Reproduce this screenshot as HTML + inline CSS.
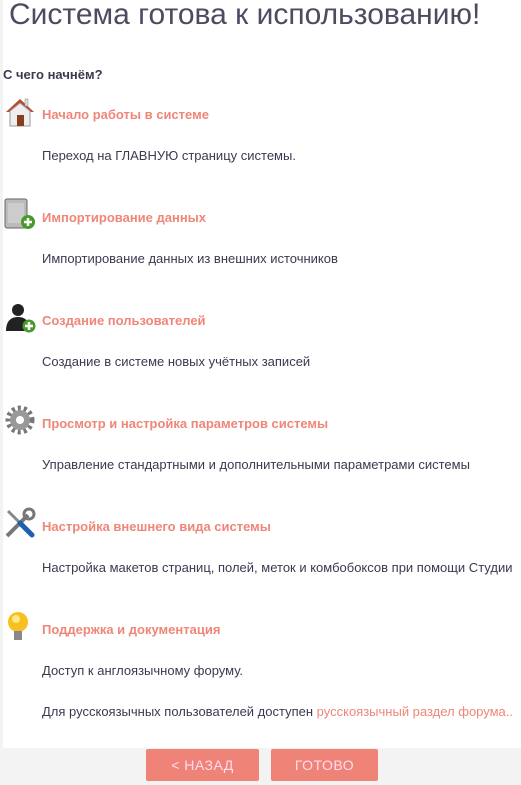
<!DOCTYPE html>
<html><head><meta charset="utf-8"><style>
body{margin:0;width:521px;height:785px;background:#f3f3f3;font-family:"Liberation Sans",Arial,sans-serif;position:relative;overflow:hidden}
.main{position:absolute;left:3px;top:0;width:518px;height:748px;background:#fff}
.t{position:absolute;white-space:nowrap}
h1{position:absolute;left:9px;top:-2px;margin:0;font-weight:normal;font-size:30px;color:#4f4a60}
.q{left:3px;top:67px;font-size:13px;font-weight:bold;color:#3a3a50}
.h{left:42px;font-size:13px;font-weight:bold;color:#ef8678}
.d{left:42px;font-size:13px;color:#3a3a50}
.ic{position:absolute;left:4px;width:32px;height:32px}
.btn{position:absolute;top:749px;height:32px;background:#ef8377;color:#fde;font-size:14px;text-align:center;line-height:32px;border-radius:2px;letter-spacing:.5px}
</style></head><body>
<div class="main"></div>
<h1>Система готова к использованию!</h1>
<div class="t q">С чего начнём?</div>

<svg class="ic" style="top:95px" viewBox="0 0 32 32"><polygon points="2,17 16,4 30,17 27,17 16,8 5,17" fill="#c0452a"/><rect x="21" y="4" width="3" height="7" fill="#ddd" stroke="#888" stroke-width=".5"/><polygon points="6,16 16,8 26,16 26,31 6,31" fill="#eee" stroke="#999"/><rect x="13" y="20" width="7" height="11" fill="#8a3d1a"/></svg>
<div class="t h" style="top:107px">Начало работы в системе</div>
<div class="t d" style="top:148px">Переход на ГЛАВНУЮ страницу системы.</div>

<svg class="ic" style="top:198px" viewBox="0 0 32 32"><rect x="1" y="1" width="22" height="29" rx="2" fill="#bbb" stroke="#666"/><rect x="4" y="5" width="16" height="20" fill="#ccc"/><circle cx="24" cy="24" r="7" fill="#4a9a2a"/><path d="M24 20v8M20 24h8" stroke="#fff" stroke-width="2.5"/></svg>
<div class="t h" style="top:210px">Импортирование данных</div>
<div class="t d" style="top:251px">Импортирование данных из внешних источников</div>

<svg class="ic" style="top:301px" viewBox="0 0 32 32"><circle cx="14" cy="9" r="6" fill="#222"/><path d="M2 30c0-10 5-14 12-14s12 4 12 14z" fill="#222"/><circle cx="25" cy="25" r="6.5" fill="#4a9a2a"/><path d="M25 21v8M21 25h8" stroke="#fff" stroke-width="2.5"/></svg>
<div class="t h" style="top:313px">Создание пользователей</div>
<div class="t d" style="top:354px">Создание в системе новых учётных записей</div>

<svg class="ic" style="top:404px" viewBox="0 0 32 32"><circle cx="16" cy="16" r="12" fill="none" stroke="#777" stroke-width="5" stroke-dasharray="3 3"/><circle cx="16" cy="16" r="10" fill="#999"/><circle cx="16" cy="16" r="4" fill="#fff"/></svg>
<div class="t h" style="top:416px">Просмотр и настройка параметров системы</div>
<div class="t d" style="top:457px">Управление стандартными и дополнительными параметрами системы</div>

<svg class="ic" style="top:507px" viewBox="0 0 32 32"><path d="M3 29L24 8" stroke="#777" stroke-width="4"/><circle cx="25" cy="7" r="5" fill="none" stroke="#777" stroke-width="3"/><path d="M4 4l12 12" stroke="#888" stroke-width="3"/><path d="M16 16l12 12" stroke="#1e5fb0" stroke-width="5" stroke-linecap="round"/></svg>
<div class="t h" style="top:519px">Настройка внешнего вида системы</div>
<div class="t d" style="top:560px">Настройка макетов страниц, полей, меток и комбобоксов при помощи Студии</div>

<svg class="ic" style="top:610px" viewBox="0 0 32 32"><circle cx="14" cy="12" r="10" fill="#f5c020"/><circle cx="12" cy="9" r="4" fill="#fde98a"/><rect x="10" y="21" width="8" height="9" fill="#888"/></svg>
<div class="t h" style="top:622px">Поддержка и документация</div>
<div class="t d" style="top:663px">Доступ к англоязычному форуму.</div>
<div class="t d" style="top:704px">Для русскоязычных пользователей доступен <span style="color:#ef8678">русскоязычный раздел форума..</span></div>

<div class="btn" style="left:146px;width:113px">&lt; НАЗАД</div>
<div class="btn" style="left:271px;width:107px">ГОТОВО</div>
</body></html>
